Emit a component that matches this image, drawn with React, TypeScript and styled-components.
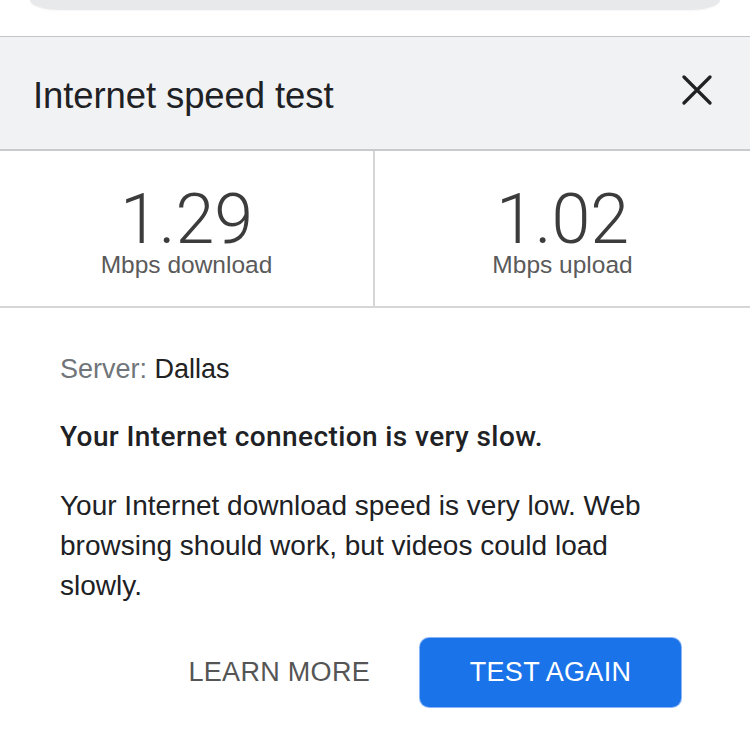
import React from 'react';
import styled, { createGlobalStyle } from 'styled-components';

const GlobalStyle = createGlobalStyle`
  html, body {
    margin: 0;
    padding: 0;
    background: #ffffff;
  }
  body {
    font-family: "Liberation Sans", Arial, Helvetica, sans-serif;
    color: #222222;
  }
`;

const Page = styled.div`
  width: 750px;
  min-height: 743px;
  background: #ffffff;
  overflow: hidden;
`;

const SearchArea = styled.div`
  height: 36px;
  display: flex;
  align-items: flex-start;
  padding: 0 30px;
  overflow: hidden;
`;

const SearchBox = styled.div`
  flex: 1;
  height: 10px;
  background: #e8e9eb;
  border-radius: 0 0 30px 30px / 0 0 10px 10px;
  box-shadow: 0 1px 2px rgba(0, 0, 0, 0.04);
`;

const Header = styled.div`
  height: 112px;
  display: flex;
  align-items: center;
  justify-content: space-between;
  padding: 0 38px 0 33px;
  background: #f1f2f4;
  border-top: 1px solid #c4c5c7;
  border-bottom: 2px solid #c9cacc;
`;

const Title = styled.h1`
  margin: 5px 0 0;
  font-size: 36.5px;
  font-weight: 400;
  color: #202124;
  letter-spacing: -0.1px;
`;

const CloseButton = styled.button`
  width: 30px;
  height: 30px;
  margin-top: -7px;
  padding: 0;
  border: none;
  background: transparent;
  display: flex;
  align-items: center;
  justify-content: center;
  cursor: pointer;
`;

const Stats = styled.div`
  display: grid;
  grid-template-columns: 1fr 1fr;
  height: 155px;
  border-bottom: 2px solid #d6d6d6;
`;

const Stat = styled.div<{ $divider?: boolean }>`
  display: flex;
  flex-direction: column;
  align-items: center;
  padding-top: 35px;
  border-right: ${(p) => (p.$divider ? '2px solid #d6d6d6' : 'none')};
`;

const Value = styled.div`
  font-family: Roboto, "Liberation Sans", sans-serif;
  font-weight: 300;
  font-size: 70px;
  line-height: 66px;
  color: #3c3c3c;
`;

const Unit = styled.div`
  margin-top: 1px;
  font-size: 24.5px;
  line-height: 24px;
  color: #5a5a5a;
`;

const Body = styled.div`
  padding: 45px 70px 0 60px;
  display: flex;
  flex-direction: column;
`;

const ServerLine = styled.p`
  margin: 0;
  font-size: 27px;
  line-height: 32px;
  color: #222;
`;

const Muted = styled.span`
  color: #70757a;
`;

const Verdict = styled.p`
  margin: 36px 0 0;
  font-family: Roboto, "Liberation Sans", sans-serif;
  font-size: 28px;
  line-height: 32px;
  font-weight: 500;
  letter-spacing: 0.4px;
  color: #202124;
`;

const Description = styled.p`
  margin: 33px 0 0;
  font-size: 28px;
  line-height: 40px;
  color: #202124;
`;

const Actions = styled.div`
  display: flex;
  justify-content: flex-end;
  align-items: center;
  gap: 24px;
  padding: 32px 69px 0 0;
`;

const Button = styled.button<{ $primary?: boolean }>`
  height: 69px;
  padding: 0 ${(p) => (p.$primary ? '48px' : '26px')};
  min-width: ${(p) => (p.$primary ? '261px' : 'auto')};
  border: none;
  border-radius: 9px;
  font-family: "Liberation Sans", Arial, sans-serif;
  font-size: 27px;
  letter-spacing: 0.3px;
  background: ${(p) => (p.$primary ? '#1a73e8' : 'transparent')};
  color: ${(p) => (p.$primary ? '#ffffff' : '#555555')};
  box-shadow: ${(p) => (p.$primary ? '0 0 0 1px #8ab4f8' : 'none')};
  cursor: pointer;
`;

const CloseIcon = () => (
  <svg width="30" height="30" viewBox="0 0 30 30" aria-hidden>
    <path
      d="M2 2 L28 28 M28 2 L2 28"
      stroke="#202124"
      strokeWidth="3.2"
      strokeLinecap="round"
    />
  </svg>
);

const results = [
  { value: '1.29', unit: 'Mbps download' },
  { value: '1.02', unit: 'Mbps upload' },
];

export default function App() {
  return (
    <Page>
      <GlobalStyle />
      <SearchArea>
        <SearchBox />
      </SearchArea>
      <Header>
        <Title>Internet speed test</Title>
        <CloseButton aria-label="Close">
          <CloseIcon />
        </CloseButton>
      </Header>
      <Stats>
        {results.map((r, i) => (
          <Stat key={r.unit} $divider={i === 0}>
            <Value>{r.value}</Value>
            <Unit>{r.unit}</Unit>
          </Stat>
        ))}
      </Stats>
      <Body>
        <ServerLine>
          <Muted>Server:</Muted> Dallas
        </ServerLine>
        <Verdict>Your Internet connection is very slow.</Verdict>
        <Description>
          Your Internet download speed is very low. Web browsing should work,
          but videos could load slowly.
        </Description>
      </Body>
      <Actions>
        <Button>LEARN MORE</Button>
        <Button $primary>TEST AGAIN</Button>
      </Actions>
    </Page>
  );
}
